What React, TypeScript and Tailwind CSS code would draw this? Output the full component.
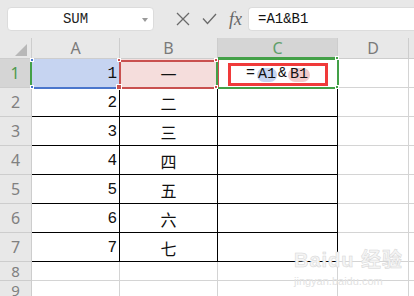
import React from 'react';

const mono = { fontFamily: '"Liberation Mono", "Noto Sans CJK SC", monospace' };

const colW = ['w-[88px]', 'w-[98px]', 'w-[120px]', 'w-[71px]'];
const letters = ['A', 'B', 'C', 'D'];
const cn = ['一', '二', '三', '四', '五', '六', '七'];

function Toolbar() {
  return (
    <div className="h-[38px] bg-[#e8e8e8] flex items-center pl-[7px]">
      <div className="w-[147px] h-[24px] bg-white rounded-[4px] border border-[#dcdcdc] flex items-center relative">
        <span className="flex-1 text-center text-[14px] text-[#222] pr-[10px]" style={mono}>SUM</span>
        <span className="absolute right-[5px] top-[10px] w-0 h-0 border-l-[3px] border-r-[3px] border-t-[4px] border-l-transparent border-r-transparent border-t-[#9a9a9a]" />
      </div>
      <svg className="ml-[22px]" width="14" height="14" viewBox="0 0 14 14">
        <path d="M1 1 L13 13 M13 1 L1 13" stroke="#6a6a6a" strokeWidth="1.3" fill="none" />
      </svg>
      <svg className="ml-[12px]" width="15" height="12" viewBox="0 0 15 12">
        <path d="M1 5.5 L5.5 10.5 L14 1" stroke="#6a6a6a" strokeWidth="1.3" fill="none" />
      </svg>
      <span className="ml-[12px] italic text-[18px] text-[#666] leading-none" style={{ fontFamily: '"Liberation Serif", serif' }}>fx</span>
      <div className="ml-[6px] flex-1 h-[24px] bg-white rounded-l-[4px] border border-r-0 border-[#dcdcdc] flex items-center pl-[9px]">
        <span className="text-[14px] text-[#111]" style={mono}>=A1&amp;B1</span>
      </div>
    </div>
  );
}

function HeaderRow() {
  return (
    <div className="flex h-[21px]">
      <div className="w-[32px] bg-[#e8e8e8] border-r border-b border-[#cdcdcd] flex items-end justify-end pr-[4px] pb-[2px]">
        <svg width="12" height="12" viewBox="0 0 12 12">
          <path d="M12 0 L12 12 L0 12 Z" fill="#b8b8b8" />
        </svg>
      </div>
      {letters.map((l, i) => (
        <div
          key={l}
          className={`${colW[i]} flex items-center justify-center text-[16px] leading-none border-r ${i === 2 ? 'bg-[#d5d5d5] text-[#5f9f6a] border-b-2 border-b-[#43a047] border-r-[#cdcdcd]' : 'bg-[#e8e8e8] text-[#7a7a7a] border-b border-[#cdcdcd]'}`}
          style={{ fontFamily: '"Noto Sans", sans-serif' }}
        >
          {l}
        </div>
      ))}
      <div className="flex-1 bg-[#e8e8e8] border-b border-[#cdcdcd]" />
    </div>
  );
}

function Row({ n }: { n: number }) {
  const inTable = n <= 7;
  const h = inTable ? 'h-[29px]' : 'h-[19px]';
  const first = n === 1;
  const line = inTable ? 'border-black' : 'border-[#d4d4d4]';
  return (
    <div className={`flex ${h}`}>
      <div
        className={`w-[32px] flex items-center justify-center leading-none border-b border-[#cdcdcd] ${inTable ? 'text-[16px]' : 'text-[15px]'} ${first ? 'bg-[#d5d5d5] text-[#4f9a4f] border-r-2 border-r-[#43a047]' : 'bg-[#e8e8e8] text-[#808080] border-r border-r-[#cdcdcd]'}`}
        style={{ fontFamily: '"Noto Sans", sans-serif' }}
      >
        {n}
      </div>
      <div className={`${colW[0]} border-r border-b ${line} ${first ? 'bg-[#c6d4f1]' : 'bg-white'} flex items-center justify-end pr-[2px] pt-[2px] text-[16px] text-[#111]`} style={mono}>
        {inTable ? n : ''}
      </div>
      <div className={`${colW[1]} border-r border-b ${line} ${first ? 'bg-[#f5dddc]' : 'bg-white'} flex items-center justify-center pt-[2px] text-[16px] text-[#111]`} style={{ fontFamily: '"Noto Sans CJK SC", sans-serif' }}>
        {inTable ? cn[n - 1] : ''}
      </div>
      <div className={`${colW[2]} border-r border-b ${line} bg-white`} />
      <div className={`${colW[3]} border-r border-b border-[#d4d4d4] bg-white`} />
      <div className="flex-1 border-b border-[#d4d4d4] bg-white" />
    </div>
  );
}

function Handle({ c, x, y, s = 4 }: { c: string; x: number; y: number; s?: number }) {
  return <span className="absolute" style={{ left: x, top: y, width: s, height: s, background: c, border: '1px solid #fff' }} />;
}

export default function App() {
  return (
    <div className="w-[414px] h-[296px] overflow-hidden bg-white relative select-none">
      <Toolbar />
      <div className="relative">
        <HeaderRow />
        {[1, 2, 3, 4, 5, 6, 7, 8, 9].map((n) => (
          <Row key={n} n={n} />
        ))}

        {/* selections on row 1 */}
        <span className="absolute left-[32px] top-[49px] w-[88px] h-[2px] bg-[#4a76cc]" />
        <span className="absolute left-[119px] top-[22px] w-[100px] h-[29px] border-2 border-[#c9504f]" />
        <span className="absolute left-[216px] top-[20px] w-[123px] h-[31px] border-2 border-[#43a047]" />
        <Handle c="#4a76cc" x={30} y={20} />
        <Handle c="#4a76cc" x={30} y={47} />
        <Handle c="#c9504f" x={117} y={20} />
        <Handle c="#c9504f" x={214} y={20} />
        <Handle c="#c9504f" x={116} y={46} s={6} />
        <Handle c="#c9504f" x={214} y={47} />
        <Handle c="#43a047" x={335} y={18} />
        <Handle c="#43a047" x={335} y={47} />

        <div className="absolute left-[228px] top-[25px] w-[100px] h-[23px] border-[3px] border-[#f03a3a] flex items-center justify-center text-[15px] text-[#111]" style={mono}>
          <span>=</span>
          <span className="ml-[2px] px-[1px] rounded-full bg-[#c6d4f1] leading-[14px]">A1</span>
          <span className="mx-[1px]">&amp;</span>
          <span className="px-[2px] rounded-full bg-[#f2cbcb] leading-[14px]">B1</span>
        </div>

        {/* watermark */}
        <div className="absolute left-[294px] top-[212px] leading-none pointer-events-none" style={{ fontFamily: '"Liberation Sans", "Noto Sans CJK SC", sans-serif' }}>
          <div className="text-[20px] font-bold tracking-[1px]" style={{ WebkitTextStroke: '0.5px #d6d6d6', color: '#f4f4f4' }}>Baidu 经验</div>
          <div className="text-[11px] mt-[6px] text-[#e2e2e2]">jingyan.baidu.com</div>
        </div>
      </div>
    </div>
  );
}
